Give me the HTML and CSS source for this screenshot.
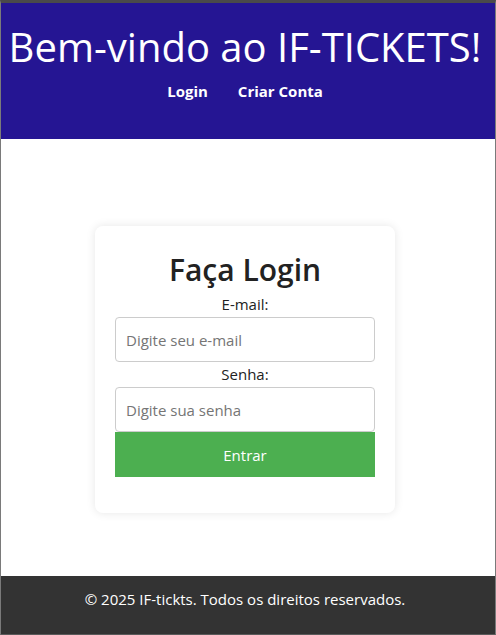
FILE: index.html
```html
<!DOCTYPE html>
<html lang="pt-BR">
<head>
<meta charset="utf-8">
<title>IF-TICKETS</title>
<link rel="stylesheet" href="styles.css">
</head>
<body>
<div class="frame">
  <header class="site-header">
    <h1 class="site-title">Bem-vindo ao IF-TICKETS!</h1>
    <nav class="site-nav">
      <a href="#" class="nav-link">Login</a>
      <a href="#" class="nav-link">Criar Conta</a>
    </nav>
  </header>
  <main class="content">
    <section class="card">
      <h2 class="card-title">Faça Login</h2>
      <form class="login-form">
        <label class="field-label" for="email">E-mail:</label>
        <input class="field-input" id="email" type="email" placeholder="Digite seu e-mail">
        <label class="field-label" for="senha">Senha:</label>
        <input class="field-input" id="senha" type="password" placeholder="Digite sua senha">
        <button class="submit-btn" type="button">Entrar</button>
      </form>
    </section>
  </main>
  <footer class="site-footer">
    <p class="footer-text">© 2025 IF-tickts. Todos os direitos reservados.</p>
  </footer>
</div>
</body>
</html>
```
FILE: styles.css
```css
* { box-sizing: border-box; }
html, body {
  margin: 0;
  padding: 0;
  height: 100%;
}
body {
  font-family: "Open Sans", "Noto Sans", Arial, sans-serif;
  background: #ffffff;
  color: #222;
}
.frame {
  height: 635px;
  display: flex;
  flex-direction: column;
  border-top: 3px solid #4a4a4a;
  border-left: 1px solid #7a7a7a;
  border-right: 1px solid #7a7a7a;
  border-bottom: 1px solid #5a5a5a;
}
.site-header {
  background: #251593;
  color: #fff;
  height: 136px;
  display: flex;
  flex-direction: column;
  align-items: center;
  padding-top: 17px;
  padding-right: 6px;
}
.site-title {
  margin: 0;
  font-size: 40px;
  font-weight: 400;
  line-height: 54px;
  white-space: nowrap;
}
.site-nav {
  display: flex;
  gap: 30px;
  margin-top: 5px;
}
.nav-link {
  color: #fff;
  text-decoration: none;
  font-weight: 700;
  font-size: 15px;
  line-height: 24px;
}
.content {
  flex: 1;
  display: flex;
  justify-content: center;
  align-items: flex-start;
  padding-top: 87px;
  padding-right: 6px;
}
.card {
  width: 300px;
  height: 287px;
  background: #fff;
  border-radius: 8px;
  box-shadow: 0 0 10px rgba(0, 0, 0, 0.1);
  padding: 20px 20px;
  display: flex;
  flex-direction: column;
  align-items: center;
}
.card-title {
  margin: 0;
  font-size: 30px;
  font-weight: 600;
  line-height: 44px;
  color: #222;
  padding-top: 2px;
}
.login-form {
  width: 260px;
  display: flex;
  flex-direction: column;
  align-items: center;
}
.field-label {
  font-size: 15px;
  line-height: 25px;
  color: #222;
}
.field-input {
  width: 260px;
  height: 45px;
  border: 1px solid #cccccc;
  border-radius: 4px;
  padding: 0 10px;
  font-family: inherit;
  font-size: 15px;
  color: #333;
}
.field-input::placeholder {
  color: #757575;
}
.submit-btn {
  width: 260px;
  height: 45px;
  border: none;
  border-radius: 0;
  background: #4caf50;
  color: #fff;
  font-family: inherit;
  font-size: 15px;
}
.site-footer {
  background: #333333;
  color: #fff;
  height: 58px;
  display: flex;
  justify-content: center;
  padding-top: 12px;
  padding-right: 6px;
}
.footer-text {
  margin: 0;
  font-size: 15px;
  line-height: 22px;
}
```
